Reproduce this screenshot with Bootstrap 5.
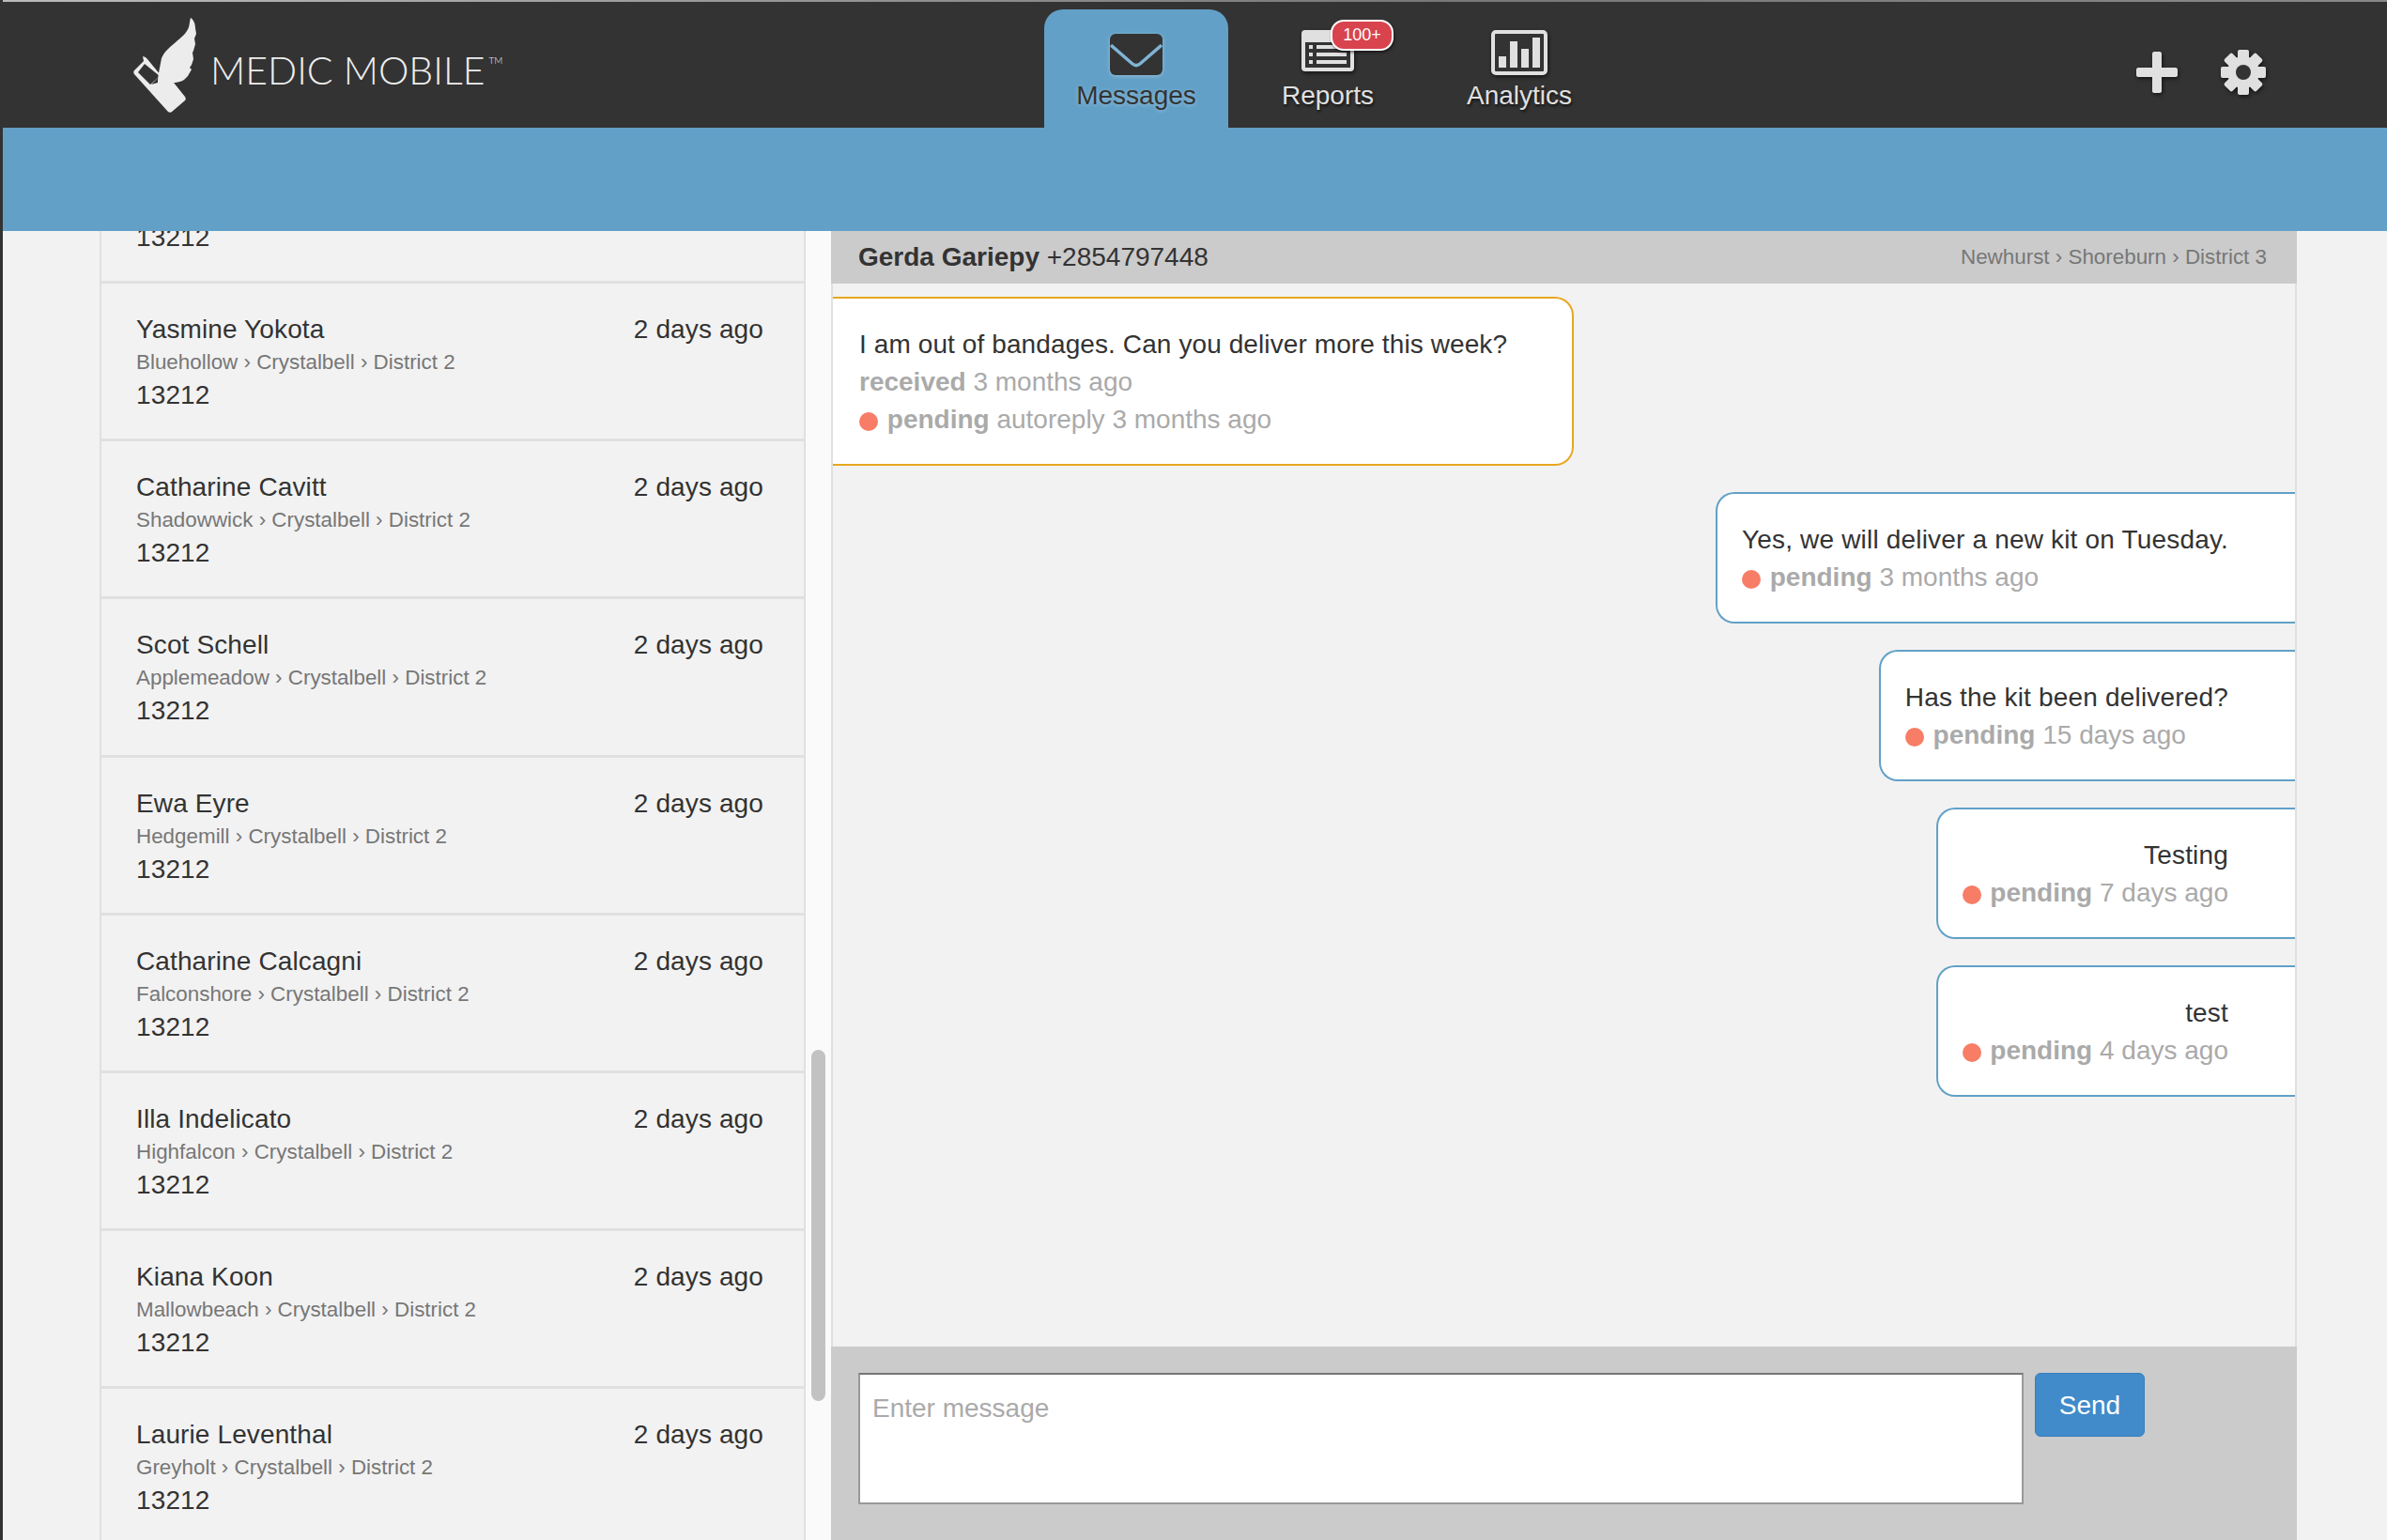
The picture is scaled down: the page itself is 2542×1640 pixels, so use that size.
<!DOCTYPE html>
<html lang="en">
<head>
    <meta charset="UTF-8">
    <meta name="viewport" content="width=device-width, initial-scale=1.0">
    <title>Medic Mobile - Messages</title>
    <link href="https://cdn.jsdelivr.net/npm/bootstrap@5.3.0/dist/css/bootstrap.min.css" rel="stylesheet">
    <style>
        html, body {
            height: 100%;
        }
        body {
            background-color: #f2f2f2;
            font-family: "Liberation Sans", Arial, sans-serif;
            font-size: 28px;
            line-height: 40px;
            color: #333;
            border-left: 3px solid #333;
            overflow: hidden;
        }
        .top-line {
            height: 2px;
            background: linear-gradient(90deg, #bbb, #777 60%, #888);
        }
        .app-header {
            height: 134px;
            background-color: #333;
            padding: 0;
        }
        .brand-box {
            width: 1109px;
            padding-left: 139px;
            align-self: stretch;
        }
        .brand-text {
            font-family: Lato, "Liberation Sans", sans-serif;
            font-weight: 300;
            font-size: 41px;
            line-height: 40px;
            color: #eee;
            margin-left: 15px;
            margin-top: 11px;
        }
        .brand-text sup {
            font-size: 10px;
            top: -22px;
            margin-left: 4px;
        }
        .tab-strip {
            align-self: flex-end;
            height: 126px;
        }
        .tab-item {
            position: relative;
            width: 196px;
            margin-right: 8px;
            height: 126px;
            border-radius: 20px 20px 0 0;
            color: #e0e0e0;
            text-align: center;
            text-decoration: none;
            text-shadow: 1px 2px 3px rgba(0, 0, 0, 0.7);
            font-size: 28px;
        }
        .tab-item svg {
            display: block;
            margin: 22px auto 0;
            filter: drop-shadow(1px 2px 2px rgba(0, 0, 0, 0.6));
        }
        .tab-item .tab-label {
            display: block;
            position: relative;
            margin-top: 2px;
        }
        .tab-item svg.short-icon {
            margin-bottom: 6px;
        }
        .tab-item.is-active {
            background-color: #62a0c7;
            color: #333;
            text-shadow: 0 1px 4px rgba(255, 255, 255, 0.35);
        }
        .tab-item.is-active svg {
            margin-top: 26px;
            margin-bottom: 0;
            filter: drop-shadow(0 1px 2px rgba(255, 255, 255, 0.35));
        }
        .count-pill {
            position: absolute;
            left: 101px;
            top: 11px;
            width: 67px;
            height: 33px;
            line-height: 28px;
            font-size: 18px;
            color: #fff;
            text-shadow: none;
            background-color: #d9434e;
            border: 2px solid #fff;
            border-radius: 14px;
            box-shadow: 1px 2px 3px rgba(0, 0, 0, 0.5);
        }
        .tool-icons {
            margin-left: auto;
            padding-right: 129px;
            padding-top: 16px;
            gap: 46px;
        }
        .tool-icons svg {
            display: block;
            filter: drop-shadow(1px 2px 2px rgba(0, 0, 0, 0.6));
        }
        .sub-bar {
            height: 110px;
            background-color: #62a0c7;
        }
        .main-area {
            height: 1394px;
        }
        .list-side {
            position: relative;
            width: 882px;
            padding-left: 103px;
            overflow: hidden;
        }
        .scroll-gutter {
            width: 27px;
            flex-shrink: 0;
            background-color: #fafafa;
        }
        .lead-list {
            flex-grow: 1;
            min-width: 0;
            background-color: #f2f2f2;
            border-left: 2px solid #e0e0e0;
            border-right: 2px solid #e0e0e0;
            border-radius: 0;
            height: 100%;
            overflow: hidden;
            letter-spacing: 0.12px;
        }
        .lead-list .list-group-item {
            flex-shrink: 0;
            background: transparent;
            color: #333;
            border: 0;
            border-radius: 0;
            border-bottom: 3px solid #e0e0e0;
            padding: 29px 43px 25px 37px;
            height: 168.2px;
        }
        .lead-list .list-group-item.cut-off {
            height: auto;
            margin-top: -13px;
            padding-top: 0;
            padding-bottom: 26px;
        }
        .place-line {
            font-size: 22.4px;
            line-height: 30px;
            color: #777;
            letter-spacing: 0;
        }
        .scroll-thumb {
            position: absolute;
            left: 861px;
            top: 872px;
            width: 15px;
            height: 374px;
            border-radius: 8px;
            background-color: #c2c2c2;
        }
        .thread-side {
            width: 1561px;
        }
        .thread-head {
            height: 56px;
            background-color: #cbcbcb;
            padding: 0 32px 0 29px;
            line-height: 48px;
        }
        .thread-body {
            background-color: #f2f2f2;
            border-left: 2px solid #e0e0e0;
            border-right: 2px solid #e0e0e0;
            padding-top: 14px;
            gap: 28px;
        }
        .bubble {
            background-color: #fff;
            padding: 29px 69px 27px 28px;
            border: 2px solid #e8a71f;
            border-left: 0;
            border-radius: 0 20px 20px 0;
        }
        .bubble.is-out {
            border: 2px solid #62a0c7;
            border-right: 0;
            border-radius: 20px 0 0 20px;
            padding-left: 26px;
            padding-right: 71px;
            text-align: right;
        }
        .msg-text {
            letter-spacing: 0.1px;
        }
        .bubble.is-out .msg-text {
            letter-spacing: 0.18px;
        }
        .msg-meta {
            color: #aaa;
            text-align: left;
        }
        .status-dot {
            display: inline-block;
            width: 20px;
            height: 20px;
            margin-right: 2px;
            vertical-align: -3px;
            border-radius: 50%;
            background-color: #f77d66;
        }
        .reply-box {
            height: 206px;
            background-color: #cbcbcb;
            padding: 28px 29px;
            gap: 12px;
        }
        .reply-box .form-control {
            width: 1241px;
            height: 140px;
            padding: 16px 13px 6px;
            font-size: 28px;
            line-height: 40px;
            color: #333;
            border-radius: 0;
            border: 2px solid;
            border-color: #767676 #999 #999 #999;
            resize: none;
        }
        .reply-box .form-control::placeholder {
            color: #aaa;
        }
        .reply-box .btn {
            width: 117px;
            height: 68px;
            font-size: 28px;
            line-height: 40px;
            padding: 1px 0 0;
            color: #fff;
            background-color: #428bca;
            border: 1px solid #357ebd;
            border-radius: 6px;
        }
    </style>
</head>
<body>
    <div class="top-line"></div>

    <nav class="app-header navbar flex-nowrap align-items-center">
        <a class="brand-box d-flex align-items-center text-decoration-none" href="#">
            <svg width="67" height="101" viewBox="142 16 67 101" fill="#ececec">
                <path d="M203 16 C206 18 208 22 208 27 L209 33 L207 38 L208 44 L206 51 L205 53 L206 60 L204 66 L202 69 L204 71 L200 78 L198 80 L196 82 C193 84 190 84 187 85 L168 85 C168 78 170 70 172 59 C175 52 181 47 187 42 C193 37 199 32 201 26 C202 22 202 19 203 16 Z"/>
                <path fill-rule="evenodd" d="M152 57 L155 58 L157 60 L171 77 L161 87 L168 85 L185 85 L197 100 C198 102 198 103 197 104 L183 116 C182 117 180 117 179 116 L143 76 C142 75 142 73 143 72 L153 62 Z M154 65 L147 74 L160 87 L170 78 Z"/>
            </svg>
            <span class="brand-text">MEDIC MOBILE<sup>TM</sup></span>
        </a>

        <div class="tab-strip nav flex-nowrap">
            <a class="tab-item is-active" href="#">
                <svg width="56" height="44" viewBox="0 0 56 44">
                    <rect width="56" height="44" rx="6" fill="#333"/>
                    <path d="M1 12 L24 32 C26.500 34 29.500 34 32 32 L55 12" fill="none" stroke="#7fb4d6" stroke-width="3.500"/>
                </svg>
                <span class="tab-label">Messages</span>
            </a>
            <a class="tab-item" href="#">
                <svg class="short-icon" width="56" height="44" viewBox="0 0 56 44">
                    <rect width="56" height="44" rx="4" fill="#e0e0e0"/>
                    <rect x="4" y="13" width="48" height="27" fill="#333"/>
                    <g fill="#e0e0e0">
                        <rect x="8" y="16" width="4" height="4"/>
                        <rect x="8" y="24" width="4" height="4"/>
                        <rect x="8" y="32" width="4" height="4"/>
                        <rect x="16" y="16" width="32" height="4"/>
                        <rect x="16" y="24" width="32" height="4"/>
                        <rect x="16" y="32" width="32" height="4"/>
                    </g>
                </svg>
                <span class="tab-label">Reports</span>
                <span class="count-pill">100+</span>
            </a>
            <a class="tab-item" href="#">
                <svg width="60" height="48" viewBox="0 0 60 48">
                    <rect x="2" y="2" width="56" height="44" rx="3" fill="#333" stroke="#e0e0e0" stroke-width="4"/>
                    <g fill="#e0e0e0">
                        <rect x="8" y="28" width="8" height="12"/>
                        <rect x="20" y="12" width="8" height="28"/>
                        <rect x="32" y="20" width="8" height="20"/>
                        <rect x="44" y="8" width="8" height="32"/>
                    </g>
                </svg>
                <span class="tab-label">Analytics</span>
            </a>
        </div>

        <div class="tool-icons d-flex align-items-center">
            <svg width="44" height="44" viewBox="0 0 44 44" fill="#e0e0e0">
                <path d="M17 2 C17 1 18 0 19 0 L25 0 C26 0 27 1 27 2 L27 17 L42 17 C43 17 44 18 44 19 L44 25 C44 26 43 27 42 27 L27 27 L27 42 C27 43 26 44 25 44 L19 44 C18 44 17 43 17 42 L17 27 L2 27 C1 27 0 26 0 25 L0 19 C0 18 1 17 2 17 L17 17 Z"/>
            </svg>
            <svg width="48" height="48" viewBox="0 0 48 48">
                <g fill="#e0e0e0">
                    <rect x="18" y="0" width="12" height="48" rx="2"/>
                    <rect x="18" y="0" width="12" height="48" rx="2" transform="rotate(45 24 24)"/>
                    <rect x="18" y="0" width="12" height="48" rx="2" transform="rotate(90 24 24)"/>
                    <rect x="18" y="0" width="12" height="48" rx="2" transform="rotate(135 24 24)"/>
                    <circle cx="24" cy="24" r="17"/>
                </g>
                <circle cx="24" cy="24" r="8" fill="#333"/>
            </svg>
        </div>
    </nav>

    <div class="sub-bar"></div>

    <div class="main-area d-flex">
        <div class="list-side d-flex">
            <div id="leadList" class="lead-list list-group">
                <div class="list-group-item cut-off">13212</div>
            </div>
            <div class="scroll-gutter"></div>
            <div class="scroll-thumb"></div>
        </div>

        <div class="thread-side d-flex flex-column">
            <div class="thread-head d-flex justify-content-between align-items-center">
                <div><strong>Gerda Gariepy</strong> +2854797448</div>
                <div class="place-line">Newhurst › Shoreburn › District 3</div>
            </div>

            <div class="thread-body d-flex flex-column flex-grow-1">
                <div class="bubble align-self-start">
                    <div class="msg-text">I am out of bandages. Can you deliver more this week?</div>
                    <div class="msg-meta"><strong>received</strong> 3 months ago</div>
                    <div class="msg-meta"><span class="status-dot"></span> <strong>pending</strong> autoreply 3 months ago</div>
                </div>
                <div class="bubble is-out align-self-end">
                    <div class="msg-text">Yes, we will deliver a new kit on Tuesday.</div>
                    <div class="msg-meta"><span class="status-dot"></span> <strong>pending</strong> 3 months ago</div>
                </div>
                <div class="bubble is-out align-self-end">
                    <div class="msg-text">Has the kit been delivered?</div>
                    <div class="msg-meta"><span class="status-dot"></span> <strong>pending</strong> 15 days ago</div>
                </div>
                <div class="bubble is-out align-self-end">
                    <div class="msg-text">Testing</div>
                    <div class="msg-meta"><span class="status-dot"></span> <strong>pending</strong> 7 days ago</div>
                </div>
                <div class="bubble is-out align-self-end">
                    <div class="msg-text">test</div>
                    <div class="msg-meta"><span class="status-dot"></span> <strong>pending</strong> 4 days ago</div>
                </div>
            </div>

            <div class="reply-box d-flex align-items-start">
                <textarea class="form-control" placeholder="Enter message"></textarea>
                <button class="btn" type="button">Send</button>
            </div>
        </div>
    </div>

    <script src="https://cdn.jsdelivr.net/npm/bootstrap@5.3.0/dist/js/bootstrap.bundle.min.js"></script>
    <script>
        // Contacts shown in the left column
        const leads = [
            { name: "Yasmine Yokota", place: "Bluehollow" },
            { name: "Catharine Cavitt", place: "Shadowwick" },
            { name: "Scot Schell", place: "Applemeadow" },
            { name: "Ewa Eyre", place: "Hedgemill" },
            { name: "Catharine Calcagni", place: "Falconshore" },
            { name: "Illa Indelicato", place: "Highfalcon" },
            { name: "Kiana Koon", place: "Mallowbeach" },
            { name: "Laurie Leventhal", place: "Greyholt" }
        ];

        const list = document.getElementById('leadList');
        leads.forEach(lead => {
            const row = document.createElement('div');
            row.className = 'list-group-item';
            row.innerHTML = `
                <div class="d-flex justify-content-between"><span>${lead.name}</span><span>2 days ago</span></div>
                <div class="place-line">${lead.place} › Crystalbell › District 2</div>
                <div>13212</div>
            `;
            list.appendChild(row);
        });
    </script>
</body>
</html>
